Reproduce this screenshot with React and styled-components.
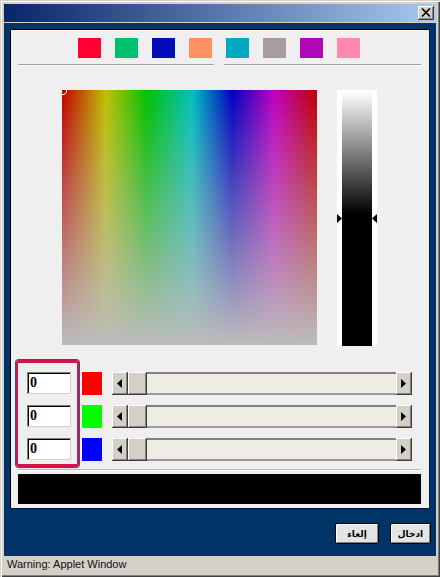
import React from 'react';
import styled, { createGlobalStyle } from 'styled-components';

const GlobalStyle = createGlobalStyle`
  html, body {
    margin: 0;
    padding: 0;
    background: #d4d0c8;
  }
  * {
    box-sizing: border-box;
  }
`;

const presets = ['#ff0030', '#00c070', '#000cb8', '#ff9060', '#00a8c0', '#a89ca0', '#b008b8', '#ff88b0'];
const channels = ['#ff0000', '#00ff00', '#0000ff'];

const Bevel = `
  background: #d4d0c8;
  box-shadow: inset 1px 1px 0 #ffffff, inset -1px -1px 0 #808080;
  border-right: 1px solid #404040;
  border-bottom: 1px solid #404040;
`;

const Window = styled.div`
  display: flex;
  flex-direction: column;
  width: 440px;
  height: 577px;
  padding: 4px;
  background: #d4d0c8;
  box-shadow: inset 1px 1px 0 #d4d0c8, inset 2px 2px 0 #ffffff, inset -1px -1px 0 #404040, inset -2px -2px 0 #808080;
  overflow: hidden;
`;

const TitleBar = styled.div`
  display: flex;
  align-items: center;
  justify-content: flex-end;
  flex: none;
  height: 19px;
  padding: 0 2px 1px 0;
  background: linear-gradient(90deg, #0a246a, #a6caf0);
  border-bottom: 1px solid #d4d0c8;
`;

const CloseButton = styled.div`
  ${Bevel}
  display: flex;
  align-items: center;
  justify-content: center;
  width: 16px;
  height: 14px;
`;

const Body = styled.div`
  flex: 1;
  display: flex;
  flex-direction: column;
  padding: 6px 6px 0;
  background: #003366;
`;

const Panel = styled.div`
  display: flex;
  flex-direction: column;
  flex: none;
  height: 480px;
  background: #efefef;
  border-top: 1px solid #000000;
  border-left: 1px solid #000000;
  border-right: 1px solid #001a40;
  border-bottom: 1px solid #001a40;
`;

const PresetRow = styled.div`
  display: flex;
  gap: 14px;
  padding: 8px 0 0 67px;
`;

const Preset = styled.div`
  width: 23px;
  height: 20px;
  background: ${(p) => p.$color};
`;

const DividerRow = styled.div`
  display: flex;
  gap: 10px;
  margin: 6px 0 0 7px;
`;

const Divider = styled.div`
  width: ${(p) => p.$width}px;
  height: 2px;
  background: #a0a0a0;
  border-bottom: 1px solid #ffffff;
`;

const PickerRow = styled.div`
  display: flex;
  gap: 20px;
  padding: 24px 0 0 51px;
`;

const ColorField = styled.div`
  position: relative;
  width: 255px;
  height: 255px;
  background:
    linear-gradient(180deg, rgba(190, 190, 190, 0), #bcbcbc),
    linear-gradient(
      90deg,
      #c00000 0%,
      #c0c000 17.2%,
      #00c000 33.3%,
      #00c0c0 51%,
      #0000c0 66.7%,
      #c000c0 83.5%,
      #c00000 100%
    );
`;

const FieldCursor = styled.svg`
  position: absolute;
  left: 0;
  top: 0;
`;

const BrightnessBar = styled.div`
  position: relative;
  width: 40px;
  height: 256px;
  padding: 0 5px;
  background: #ffffff;
`;

const BrightnessFill = styled.div`
  height: 100%;
  background: linear-gradient(180deg, #ffffff 0, #fbf8f8 4px, #000000 124px);
`;

const Marker = styled.svg`
  position: absolute;
  top: 124px;
  ${(p) => (p.$side === 'left' ? 'left: 0;' : 'right: 0;')}
`;

const Controls = styled.div`
  position: relative;
  display: flex;
  flex-direction: column;
  gap: 10px;
  padding: 26px 0 0 16px;
`;

const ControlRow = styled.div`
  display: flex;
  align-items: flex-start;
  height: 23px;
`;

const ValueInput = styled.div`
  width: 44px;
  height: 22px;
  padding: 2px 0 0 2px;
  background: #ffffff;
  border: 1px solid #d4d0c8;
  border-top-color: #808070;
  border-left-color: #808070;
  box-shadow: inset 1px 1px 0 #000000;
  color: #000000;
  font: bold 14px 'Liberation Serif', serif;
`;

const ChannelSwatch = styled.div`
  width: 20px;
  height: 23px;
  margin: 0 10px 0 11px;
  background: ${(p) => p.$color};
`;

const ScrollBar = styled.div`
  display: flex;
  width: 300px;
  height: 23px;
`;

const ScrollButton = styled.div`
  ${Bevel}
  display: flex;
  align-items: center;
  justify-content: center;
  flex: none;
  width: 16px;
`;

const ScrollThumb = styled.div`
  ${Bevel}
  flex: none;
  width: 19px;
`;

const ScrollTrack = styled.div`
  flex: 1;
  background: #efebe5;
  border-top: 2px solid #808080;
  border-bottom: 2px solid #9a9a9a;
`;

const Annotation = styled.div`
  position: absolute;
  left: 5px;
  top: 14px;
  width: 63px;
  height: 107px;
  border: 2px solid #d81444;
  border-top-width: 3px;
  border-bottom-width: 3px;
  border-radius: 3px;
  box-shadow: 0 0 0 1px #1a5c98;
  pointer-events: none;
`;

const BottomRule = styled.div`
  height: 2px;
  margin: 8px 8px 0 7px;
  background: #b8b8b8;
  border-bottom: 1px solid #ffffff;
`;

const Preview = styled.div`
  height: 30px;
  margin: 3px 8px 0 7px;
  background: #000000;
`;

const Footer = styled.div`
  display: flex;
  justify-content: flex-end;
  gap: 11px;
  margin: 14px -1px 0 0;
`;

const ActionButton = styled.div`
  display: flex;
  align-items: center;
  justify-content: center;
  width: ${(p) => p.$width}px;
  height: 21px;
  background: #e4e4e4;
  border: 1px solid #000814;
  border-radius: 2px;
  box-shadow: inset 1px 1px 0 #ffffff, inset -1px -1px 0 #808080;
  color: #000000;
  font: bold 9px 'DejaVu Sans', sans-serif;
`;

const StatusBar = styled.div`
  flex: none;
  height: 17px;
  padding: 1px 0 0 3px;
  background: #d4d0c8;
  color: #101010;
  font: 11px/15px 'Liberation Sans', sans-serif;
`;

const Arrow = ({ dir }) => (
  <svg width="5" height="9" viewBox="0 0 5 9">
    <path d={dir === 'left' ? 'M5 0V9L0 4.5Z' : 'M0 0V9L5 4.5Z'} fill="#000" />
  </svg>
);

const App = () => (
  <>
    <GlobalStyle />
    <Window>
      <TitleBar>
        <CloseButton>
          <svg width="10" height="9" viewBox="0 0 10 9">
            <path d="M1 0.5L9 8.5M9 0.5L1 8.5" stroke="#000" strokeWidth="1.6" />
          </svg>
        </CloseButton>
      </TitleBar>
      <Body>
        <Panel>
          <PresetRow>
            {presets.map((color) => (
              <Preset key={color} $color={color} />
            ))}
          </PresetRow>
          <DividerRow>
            <Divider $width={196} />
            <Divider $width={197} />
          </DividerRow>
          <PickerRow>
            <ColorField>
              <FieldCursor width="5" height="5" viewBox="0 0 5 5">
                <path d="M4.5 0V2L3.5 3.5L2 4.5H0" fill="none" stroke="#fff" strokeWidth="1" />
              </FieldCursor>
            </ColorField>
            <BrightnessBar>
              <BrightnessFill />
              <Marker $side="left" width="5" height="9" viewBox="0 0 5 9">
                <path d="M0 0V9L5 4.5Z" fill="#000" />
              </Marker>
              <Marker $side="right" width="5" height="9" viewBox="0 0 5 9">
                <path d="M5 0V9L0 4.5Z" fill="#000" />
              </Marker>
            </BrightnessBar>
          </PickerRow>
          <Controls>
            {channels.map((color) => (
              <ControlRow key={color}>
                <ValueInput>0</ValueInput>
                <ChannelSwatch $color={color} />
                <ScrollBar>
                  <ScrollButton>
                    <Arrow dir="left" />
                  </ScrollButton>
                  <ScrollThumb />
                  <ScrollTrack />
                  <ScrollButton>
                    <Arrow dir="right" />
                  </ScrollButton>
                </ScrollBar>
              </ControlRow>
            ))}
            <Annotation />
          </Controls>
          <BottomRule />
          <Preview />
        </Panel>
        <Footer>
          <ActionButton $width={44}>إلغاء</ActionButton>
          <ActionButton $width={41}>ادخال</ActionButton>
        </Footer>
      </Body>
      <StatusBar>Warning: Applet Window</StatusBar>
    </Window>
  </>
);

export default App;
